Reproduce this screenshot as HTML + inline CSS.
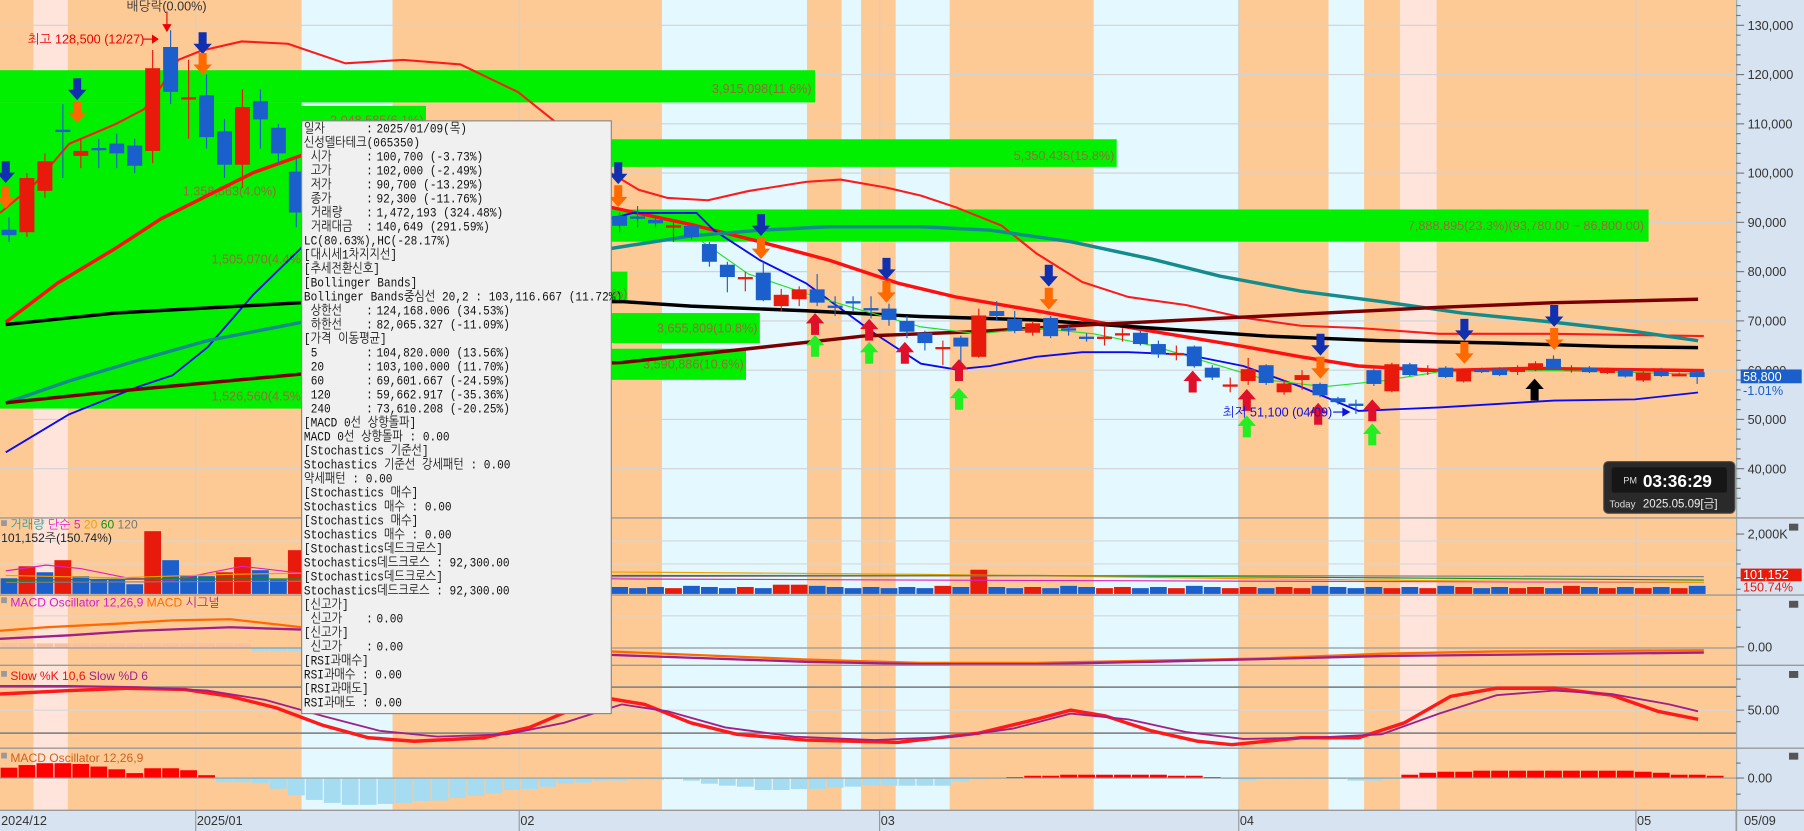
<!DOCTYPE html>
<html><head><meta charset="utf-8"><style>
html,body{margin:0;padding:0;background:#fdca96;overflow:hidden}
svg{display:block}
text{font-family:"Liberation Sans","NanumGothic","Noto Sans CJK KR",sans-serif}
text.mono{font-family:"Liberation Mono","NanumGothic","Noto Sans CJK KR",monospace}
</style></head><body>
<svg id="s" width="1804" height="831" viewBox="0 0 1567 722" preserveAspectRatio="none" xmlns="http://www.w3.org/2000/svg">
<rect x="0" y="0" width="1567" height="722" fill="#fdca96"/>
<g id="bands"></g><g id="grid"></g><g id="green"></g><g id="lines"></g><g id="cand"></g><g id="arr"></g><g id="low"></g><g id="axis"></g>
<g id="tip"></g>
</svg>
<script>
const NS="http://www.w3.org/2000/svg";
function el(p,t,a,txt){const e=document.createElementNS(NS,t);for(const k in a)e.setAttribute(k,a[k]);if(txt!==undefined)e.textContent=txt;document.getElementById(p).appendChild(e);return e;}
const Y=p=>22+(130-p)*4.28;
const X=i=>7.8+15.6*i;
[[0,29,'#fdca96'],[29,59,'#ffe4dc'],[59,262,'#fdca96'],[262,341,'#e4f8ff'],[341,575,'#fdca96'],[575,701,'#e4f8ff'],[701,731,'#fdca96'],[731,748,'#e4f8ff'],[748,778,'#fdca96'],[778,825,'#e4f8ff'],[825,950,'#fdca96'],[950,1076,'#e4f8ff'],[1076,1154,'#fdca96'],[1154,1185,'#e4f8ff'],[1185,1216,'#fdca96'],[1216,1248,'#ffe4dc'],[1248,1508,'#fdca96']].forEach(b=>el('bands','rect',{x:b[0],y:0,width:b[1]-b[0],height:704,fill:b[2]}));
const G='#00f000';
[[0,61,708,28],[0,89,262,266],[0,92,370,18],[0,236,545,26],[0,272,660,26],[0,303,648,27],[530,121,440,24],[530,182,902,28]].forEach(b=>el('green','rect',{x:b[0],y:b[1],width:b[2],height:b[3],fill:G}));
[[705,81,'3,915,098(11.6%)'],[368,108,'2,048,585(6.1%)'],[240,170,'1,358,863(4.0%)'],[265,229,'1,505,070(4.4%)'],[545,259,'5%)'],[658,289,'3,655,809(10.8%)'],[646,320,'3,590,886(10.6%)'],[265,348,'1,526,560(4.5%)'],[968,139,'5,350,435(15.8%)'],[1428,200,'7,888,895(23.3%)(93,780.00 ~ 86,800.00)']].forEach(t=>el('green','text',{x:t[0],y:t[1],'text-anchor':'end','font-size':11,fill:'#9a6a3a'},t[2]));
for(let p=40;p<=130;p+=10)el('grid','line',{x1:0,x2:1508,y1:Y(p),y2:Y(p),stroke:'#d2d2d2','stroke-width':1});
[[470],[490],[535],[617],[597],[637]].forEach(v=>el('grid','line',{x1:0,x2:1508,y1:v[0],y2:v[0],stroke:'#d6d6d6'}));
[170,451,764,1076,1421].forEach(x=>el('grid','line',{x1:x,x2:x,y1:0,y2:722,stroke:'#cfcfcf'}));
function pl(pts,c,w){el('lines','polyline',{points:pts.map(p=>p.join(',')).join(' '),fill:'none',stroke:c,'stroke-width':w,'stroke-linejoin':'round'});}
pl([[0,185],[30,160],[60,125],[100,108],[125,95],[140,75],[155,52],[175,44],[210,36],[250,38],[300,55],[350,52],[400,56],[450,80],[500,120],[530,150],[555,165],[580,172],[615,174],[650,166],[700,158],[730,156],[770,163],[800,170],[830,180],[870,196],[900,220],[940,245],[980,258],[1030,265],[1080,276],[1130,283],[1180,285],[1250,290],[1350,290],[1480,292]],'#ff1a1a',1.8);
pl([[5,280],[50,246],[100,216],[140,190],[180,170],[220,150],[262,135],[300,128],[400,130],[460,150],[530,180],[600,195],[660,210],[720,226],[780,246],[830,258],[900,270],[960,281],[1020,291],[1080,301],[1130,310],[1180,318],[1250,322],[1330,320],[1480,322]],'#ff1010',3);
pl([[5,393],[60,360],[120,336],[150,326],[180,302],[220,256],[262,215],[300,170],[530,190],[550,185],[605,185],[620,200],[660,226],[700,246],[760,290],[800,316],[830,321],[860,318],[900,310],[940,306],[980,306],[1030,308],[1080,318],[1130,336],[1180,357],[1250,354],[1350,348],[1420,347],[1475,341]],'#0a0af0',1.6);
pl([[5,350],[60,331],[120,313],[180,296],[262,280],[530,216],[600,205],[660,200],[720,197],[800,197],[860,200],[930,210],[1000,225],[1060,240],[1130,253],[1200,262],[1270,272],[1350,280],[1420,288],[1475,296]],'#148c8c',3);
pl([[5,282],[100,272],[262,263],[540,262],[600,266],[700,270],[800,275],[900,278],[1000,285],[1100,292],[1200,296],[1300,298],[1400,301],[1475,302]],'#000',3);
pl([[5,350],[100,340],[262,325],[540,315],[650,303],[750,292],[850,288],[950,282],[1050,277],[1150,272],[1250,267],[1350,263],[1475,260]],'#7a0000',3);
pl([[610,210],[650,238],[700,255],[750,270],[800,284],[850,290],[900,285],[950,290],[1000,300],[1050,315],[1100,330],[1150,336],[1200,331],[1250,323],[1350,322],[1475,325]],'#22e022',1);
const C=[[0,88.5,87.4,91,86],[1,88,99,100,87],[2,96.4,102.4,104,95],[3,108.8,108.4,114,99],[4,103.5,104.5,107,101],[5,105.1,105,107,101],[6,106,104,108,101],[7,105.6,101.5,107,100],[8,104.5,121.3,125,102],[9,125.6,116.5,129,114],[10,115,115.4,123,107],[11,115.8,107.3,120,105],[12,108.5,101.7,111,99],[13,101.7,113.4,117,97],[14,114.6,110.9,117,105],[15,109.2,104,110,102],[16,100.3,92,103,89],
[34,91.3,89.3,92,88],[35,91.2,91,93.3,89],[36,90.5,89.8,91,89],[37,89.2,89.4,90.5,86],[38,89.3,87,89.5,86.5],[39,85.6,82,86,81],[40,81.4,78.9,82,75.8],[41,78.7,78.9,80,76],[42,79.8,74.2,82,74],[43,73,75.3,76.5,72],[44,74.4,76.4,77,73],[45,76.4,73.7,79.5,73],[46,73.1,73,75,71],[47,74,73.7,75,72],[48,72.6,72.5,75,70.5],[49,72.5,70.2,73.5,69],[50,70,67.8,71,66.5],[51,67.6,65.5,68,64],[52,64.5,64.7,66,61],[53,66.6,64.8,67,61.5],[54,62.7,71.1,72.5,62.5],[55,72,71,74,70],[56,70.4,68,72,67.5],[57,67.6,69.5,70,67],[58,70.6,66.9,71,66.5],[59,68.5,68.1,69,67],[60,66.8,66.4,67.5,65.8],[61,66.4,66.8,69,65],[62,67.3,67.5,68.5,65.8],[63,67.6,65.3,68,65],[64,65.3,63.2,66,62.5],[65,63.3,63.5,65,62],[66,64.8,60.8,65,60.5],[67,60.5,58.5,61,58],[68,56.9,57.1,58.5,55.5],[69,57.8,60.2,62.5,57],[70,61,57.4,61.2,57],[71,55.5,57.3,58,55],[72,58,59,60,56],[73,57.2,54.9,57.5,54.5],[74,54.3,53.5,54.6,53],[75,53.2,52.9,54,51.1],[76,60,57.2,60.3,56.8],[77,55.7,61.2,61.5,55.5],[78,61.2,59,61.5,58.8],[79,59.9,60.1,61,59],[80,60.5,58.6,60.8,58.4],[81,57.7,60,60.3,57.5],[82,60.2,59.6,60.5,59.4],[83,60.3,59,60.6,58.8],[84,59.9,60.1,61,59],[85,60,61.4,61.8,59.8],[86,62.3,60.3,63,60],[87,60.2,60.4,61,59.5],[88,60.5,59.6,60.8,59.4],[89,59.4,60.2,60.5,59.2],[90,60,58.7,60.3,58.5],[91,57.9,59.5,59.8,57.6],[92,59.8,58.8,60.5,58.6],[93,59,59.2,59.5,58.8],[94,59.6,58.6,60.2,57.2]];
C.forEach(c=>{const x=X(c[0]),up=c[2]>=c[1],col=up?'#e81a0c':'#1a5fcc';
el('cand','line',{x1:x,x2:x,y1:Y(c[3]),y2:Y(c[4]),stroke:col,'stroke-width':1});
const t=Y(Math.max(c[1],c[2])),b=Y(Math.min(c[1],c[2]));
el('cand','rect',{x:x-6.5,y:t,width:13,height:Math.max(2,b-t),fill:col});});
function arr(x,y,d,c){const s=7,w=3.5;let pts;
if(d>0)pts=[[x-w,y],[x+w,y],[x+w,y+10],[x+s+1,y+10],[x,y+19],[x-s-1,y+10],[x-w,y+10]];
else pts=[[x-w,y+19],[x+w,y+19],[x+w,y+9],[x+s+1,y+9],[x,y],[x-s-1,y+9],[x-w,y+9]];
el('arr','polygon',{points:pts.map(p=>p.join(',')).join(' '),fill:c});}
[[5,140],[67,68],[176,28],[537,141],[661,186],[770,224],[911,230],[1147,290],[1272,277],[1350,265]].forEach(a=>arr(a[0],a[1],1,'#1030b0'));
[[5,162],[67,88],[176,46],[537,161],[661,206],[770,244],[911,250],[1147,310],[1272,297],[1350,285]].forEach(a=>arr(a[0],a[1],1,'#ff6a00'));
[[708,272],[755,277],[786,297],[833,312],[1036,322],[1083,338],[1145,350],[1192,347]].forEach(a=>arr(a[0],a[1],-1,'#e0102a'));
[[708,291],[755,297],[833,337],[1083,361],[1192,368]].forEach(a=>arr(a[0],a[1],-1,'#22ee22'));
arr(1333,329,-1,'#000');
el('arr','text',{x:110,y:9,'font-size':11,fill:'#333'},'배당락(0.00%)');
el('arr','line',{x1:145,x2:145,y1:10,y2:25,stroke:'#e00','stroke-width':1});
el('arr','polygon',{points:'141,21 149,21 145,28',fill:'#e00'});
el('arr','text',{x:24,y:38,'font-size':11,fill:'#e00'},'최고 128,500 (12/27)');
el('arr','line',{x1:124,x2:136,y1:34,y2:34,stroke:'#e00'});el('arr','polygon',{points:'132,30 138,34 132,38',fill:'#e00'});
el('arr','text',{x:1062,y:362,'font-size':11,fill:'#1010e0'},'최저 51,100 (04/09)');
el('arr','line',{x1:1158,x2:1170,y1:358,y2:358,stroke:'#1010e0'});el('arr','polygon',{points:'1166,354 1173,358 1166,362',fill:'#1010e0'});
const V=[[0,13.6,'b'],[1,24,'r'],[2,18.8,'b'],[3,29.3,'r'],[4,15.4,'b'],[5,12.4,'b'],[6,12.4,'b'],[7,8.4,'b'],[8,54.5,'r'],[9,29.3,'b'],[10,16.2,'b'],[11,15.4,'b'],[12,18.8,'r'],[13,31.9,'r'],[14,20.6,'b'],[15,12.4,'b'],[16,38,'r']];
const VB=516;
V.forEach(v=>el('low','rect',{x:v[0]*15.6+0.5,y:VB-v[1],width:14.6,height:v[1],fill:v[2]=='r'?'#e81a0c':'#1a5fcc'}));
for(let i=34;i<=94;i++){let h=[5,6,5,7,6,5,6][i%7];if(i==54)h=21;if(i==43||i==44)h=8;const c=C.find(q=>q[0]==i);const up=c&&c[2]>=c[1];el('low','rect',{x:i*15.6+0.5,y:VB-h,width:14.6,height:h,fill:up?'#e81a0c':'#1a5fcc'});}
function lp(pts,c,w){el('low','polyline',{points:pts.map(p=>p.join(',')).join(' '),fill:'none',stroke:c,'stroke-width':w});}
lp([[5,496],[40,491],[70,494],[110,502],[150,504],[210,492],[262,498],[540,503],[800,504],[1100,505],[1480,506]],'#e020c0',1);
lp([[5,500],[100,502],[200,499],[262,498],[540,497],[800,499],[1100,503],[1300,505],[1480,506]],'#f0a000',1);
lp([[5,504],[150,503],[262,503],[540,500],[900,500],[1200,502],[1480,504]],'#109010',1);
lp([[5,506],[262,505],[540,501],[1000,500],[1480,501]],'#808080',1);
el('low','rect',{x:1,y:452,width:5,height:5,fill:'#999'});
el('low','text',{x:9,y:459,'font-size':10.5},'').innerHTML='<tspan fill="#2a9a9a">거래량</tspan> <tspan fill="#e020c0">단순 5</tspan> <tspan fill="#f0a000">20</tspan> <tspan fill="#109010">60</tspan> <tspan fill="#777">120</tspan>';
el('low','text',{x:1,y:471,'font-size':10.5,fill:'#222'},'101,152주(150.74%)');
lp([[0,548],[40,545],[100,542],[150,539],[200,538],[262,545],[300,552],[400,560],[530,566],[700,573],[800,576],[900,576],[1000,574],[1100,572],[1200,568],[1300,566],[1480,565]],'#ff6a00',2);
lp([[0,555],[60,552],[120,548],[200,545],[262,547],[300,553],[400,562],[530,569],[700,575],[800,577],[900,577],[1000,575],[1200,570],[1480,567]],'#a0208a',2);
for(let i=0;i<=13;i++)el('low','rect',{x:i*15.6+0.5,y:559,width:14.6,height:4,fill:'#f7c0a0'});
for(let i=14;i<=16;i++)el('low','rect',{x:i*15.6+0.5,y:563,width:14.6,height:3,fill:'#a8dcf2'});
el('low','line',{x1:0,x2:1508,y1:563,y2:563,stroke:'#999'});
el('low','rect',{x:1,y:519,width:5,height:5,fill:'#999'});
el('low','text',{x:9,y:527,'font-size':10.5},'').innerHTML='<tspan fill="#d020d0">MACD Oscillator 12,26,9</tspan>  <tspan fill="#ff6a00">MACD</tspan>  <tspan fill="#a0208a">시그널</tspan>';
el('low','line',{x1:0,x2:1508,y1:597,y2:597,stroke:'#888',"stroke-width":1.5});
el('low','line',{x1:0,x2:1508,y1:637,y2:637,stroke:'#888',"stroke-width":1.5});
lp([[0,603],[60,600],[110,598],[160,599],[200,605],[240,615],[280,630],[320,641],[360,644],[420,641],[460,632],[500,615],[530,607],[560,612],[600,628],[640,638],[700,643],[780,645],[850,637],[900,625],[930,617],[960,622],[1000,635],[1040,644],[1070,647],[1130,641],[1180,641],[1220,628],[1260,605],[1300,598],[1350,598],[1400,604],[1440,618],[1475,625]],'#ff1a1a',3);
lp([[0,596],[60,596],[120,597],[180,600],[230,608],[280,622],[330,635],[380,640],[440,638],[490,628],[540,612],[580,618],[630,632],[690,640],[760,643],[830,640],[880,633],[930,620],[980,625],[1030,636],[1080,642],[1140,641],[1200,638],[1250,620],[1300,604],[1350,600],[1400,603],[1450,612],[1475,618]],'#a0208a',1.6);
el('low','rect',{x:1,y:583,width:5,height:5,fill:'#999'});
el('low','text',{x:9,y:591,'font-size':10.5},'').innerHTML='<tspan fill="#ee1010">Slow %K 10,6</tspan>  <tspan fill="#a0208a">Slow %D 6</tspan>';
const M=[9,11.3,12.9,12.9,12.2,10,7.6,4.3,8.5,8.5,6.8,2.5,-3.7,-3.7,-4.4,-9.3,-15,-19,-21.6,-23.3,-23.3,-22.5,-21.6,-20,-19.6,-17.4,-15.4,-13.3,-10.4,-9.6,-7.6,-4.9,-4.1,-2.3,-2.3,-1.5,-1.5,-0.9,-2.3,-4.9,-6.6,-7.5,-10.4,-10.4,-9.6,-9.6,-8.4,-7.5,-6.6,-6.6,-6.6,-6.6,-6.6,-2.9,-1.2,-0.5,0.9,2,2,2.9,2.9,2.9,2.9,2.9,2.9,2,2,0.9,-0.9,-2.3,-0.9,-0.9,-0.9,-0.9,-0.9,-2.3,-2.3,-0.9,2.9,4.6,5.5,5.5,6.4,6.4,6.4,6.4,6.4,6.4,6.4,6.4,6.4,5.5,4.6,2.9,2.9,2];
const Z=676;
M.forEach((v,i)=>{if(v>=0)el('low','rect',{x:i*15.6+0.5,y:Z-v,width:14.6,height:v,fill:'#ff0000'});else el('low','rect',{x:i*15.6+0.5,y:Z,width:14.6,height:-v,fill:'#a6dcf2'});});
el('low','line',{x1:0,x2:1508,y1:Z,y2:Z,stroke:'#999'});
el('low','rect',{x:1,y:654,width:5,height:5,fill:'#999'});
el('low','text',{x:9,y:662,'font-size':10.5,fill:'#c8641e'},'MACD Oscillator 12,26,9');
el('axis','rect',{x:1508,y:0,width:59,height:722,fill:'#d7e3f0'});
el('axis','line',{x1:1508.5,x2:1508.5,y1:0,y2:722,stroke:'#9aa'});
el('axis','rect',{x:0,y:704,width:1508,height:18,fill:'#d7e3f0'});
[450,517,578,650,704].forEach(y=>el('axis','line',{x1:0,x2:1567,y1:y,y2:y,stroke:'#999',"stroke-width":1.2}));
[170,451,764,1076,1421].forEach(x=>el('axis','line',{x1:x,x2:x,y1:704,y2:722,stroke:'#999'}));
el('axis','line',{x1:1508,x2:1508,y1:704,y2:722,stroke:'#999'});
for(let p=34;p<=134;p+=2){const y=Y(p);if(y<2||y>448)continue;el('axis','line',{x1:1508,x2:p%10==0?1515:1512,y1:y,y2:y,stroke:'#777'});if(p%10==0&&p>=40)el('axis','text',{x:1518,y:y+4,'font-size':11,fill:'#333'},p+',000');}
[[464,'2,000K'],[562,'0.00'],[617,'50.00'],[676,'0.00']].forEach(t=>{el('axis','line',{x1:1508,x2:1515,y1:t[0],y2:t[0],stroke:'#777'});el('axis','text',{x:1518,y:t[0]+4,'font-size':11,fill:'#333'},t[1]);});
[478,490,502,512,530,545,590,605,627,663,690].forEach(y=>el('axis','line',{x1:1508,x2:1512,y1:y,y2:y,stroke:'#777'}));
[[1,'2024/12'],[171,'2025/01'],[452,'02'],[765,'03'],[1077,'04'],[1422,'05'],[1515,'05/09']].forEach(t=>el('axis','text',{x:t[0],y:717,'font-size':11,fill:'#333'},t[1]));
[455,522,583,654].forEach(y=>{el('axis','rect',{x:1554,y:y,width:8,height:6,fill:'#555'});});
el('axis','rect',{x:1512,y:321,width:53,height:12,fill:'#1a5fcc'});
el('axis','text',{x:1514,y:331,'font-size':11,fill:'#fff'},'58,800');
el('axis','text',{x:1514,y:343,'font-size':11,fill:'#1a5fcc'},'-1.01%');
el('axis','rect',{x:1512,y:494,width:53,height:11,fill:'#e81a0c'});
el('axis','text',{x:1514,y:503,'font-size':11,fill:'#fff'},'101,152');
el('axis','text',{x:1514,y:514,'font-size':11,fill:'#e81a0c'},'150.74%');
el('axis','rect',{x:1393,y:401,width:114,height:45,rx:4,fill:'#2a2a2a',stroke:'#555'});
el('axis','rect',{x:1400,y:406,width:100,height:22,rx:2,fill:'#161616'});
el('axis','text',{x:1410,y:420,'font-size':8,fill:'#ddd'},'PM');
el('axis','text',{x:1427,y:423,'font-size':15,'font-weight':'bold',fill:'#fff'},'03:36:29');
el('axis','text',{x:1398,y:441,'font-size':8.5,fill:'#ddd'},'Today');
el('axis','text',{x:1427,y:441,'font-size':10,fill:'#eee'},'2025.05.09[금]');
el('tip','rect',{x:262,y:105,width:269,height:515,fill:'#f0f0f0',stroke:'#888'});
const L=[['일자',':','2025/01/09(목)',0],['신성델타테크(065350)'],['시가',':','100,700 (-3.73%)',1],['고가',':','102,000 (-2.49%)',1],['저가',':','90,700 (-13.29%)',1],['종가',':','92,300 (-11.76%)',1],['거래량',':','1,472,193 (324.48%)',1],['거래대금',':','140,649 (291.59%)',1],[' LC(80.63%),HC(-28.17%)'],['[대시세1차지지선]'],['[추세전환신호]'],['[Bollinger Bands]'],[' Bollinger Bands중심선 20,2 : 103,116.667 (11.72%)'],['상한선',':','124,168.006 (34.53%)',1],['하한선',':','82,065.327 (-11.09%)',1],['[가격 이동평균]'],['5',':','104,820.000 (13.56%)',1],['20',':','103,100.000 (11.70%)',1],['60',':','69,601.667 (-24.59%)',1],['120',':','59,662.917 (-35.36%)',1],['240',':','73,610.208 (-20.25%)',1],['[MACD 0선 상향돌파]'],[' MACD 0선 상향돌파 : 0.00'],['[Stochastics 기준선]'],[' Stochastics 기준선 강세패턴 : 0.00'],[' 약세패턴 : 0.00'],['[Stochastics 매수]'],[' Stochastics 매수 : 0.00'],['[Stochastics 매수]'],[' Stochastics 매수 : 0.00'],['[Stochastics데드크로스]'],[' Stochastics데드크로스 : 92,300.00'],['[Stochastics데드크로스]'],[' Stochastics데드크로스 : 92,300.00'],['[신고가]'],['신고가',':','0.00',1],['[신고가]'],['신고가',':','0.00',1],['[RSI과매수]'],[' RSI과매수 : 0.00'],['[RSI과매도]'],[' RSI과매도 : 0.00']];
const tg=el('tip','g',{transform:'translate(264,0) scale(0.84,1)','font-size':11.5,fill:'#111'});
L.forEach((l,k)=>{const y=115+k*12.17;
 const mk=(x,s)=>{const t=document.createElementNS(NS,'text');t.setAttribute('x',x);t.setAttribute('y',y);t.setAttribute('class','mono');t.setAttribute('xml:space','preserve');t.textContent=s;tg.appendChild(t);};
 if(l.length==1)mk(0,l[0]);
 else{mk(l[3]?7:0,l[0]);mk((318-264)/0.84,l[1]);mk((327-264)/0.84,l[2]);}
});
</script>
</body></html>
